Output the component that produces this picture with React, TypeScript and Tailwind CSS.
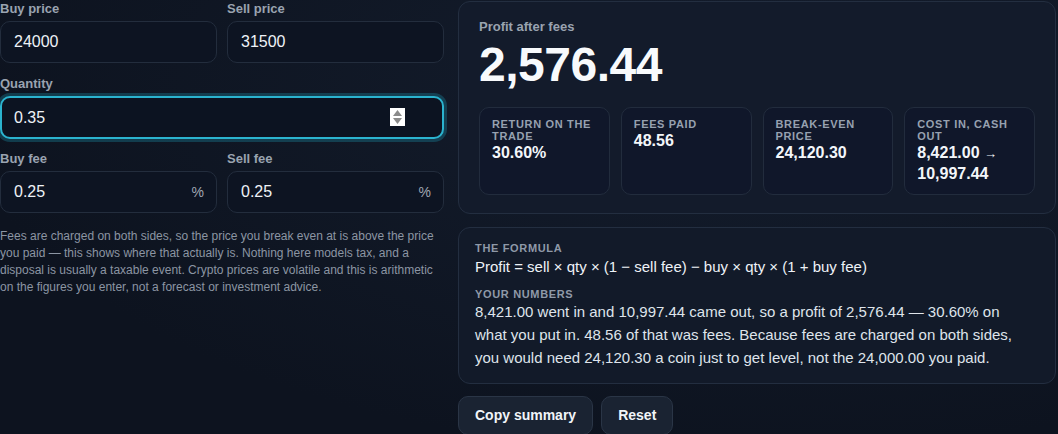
import React, { useState } from "react";

const font = "font-['Liberation_Sans',Arial,sans-serif]";

function Field({ label, value, suffix, focused, spinner }: { label: string; value: string; suffix?: string; focused?: boolean; spinner?: boolean }) {
  return (
    <label className="flex flex-col">
      <span className="text-[13px] leading-4 font-bold text-[#9aa3b0] mb-[4px]">{label}</span>
      <span className="relative block">
        <input
          readOnly
          value={value}
          className={
            focused
              ? "w-full h-[43px] rounded-[10px] bg-[#0c1321] border-2 border-[#2bb3cf] ring-[3px] ring-[#1fb6d3]/25 pl-[12px] pr-[38px] text-[16px] text-[#eef2f7] outline-none"
              : "w-full h-[42px] rounded-[10px] bg-[#0d1422] border border-[#232d3d] pl-[13px] pr-[38px] text-[16px] text-[#eef2f7] outline-none"
          }
        />
        {suffix && (
          <span className="absolute right-[13px] top-1/2 -translate-y-1/2 text-[14px] text-[#a0a7b3]">{suffix}</span>
        )}
        {spinner && (
          <span className="absolute right-[39px] top-[12px] w-[15px] h-[18px] bg-white flex flex-col items-center justify-center gap-[2px]">
            <svg width="9" height="6" viewBox="0 0 9 6"><path d="M4.5 0L9 6H0z" fill="#8a8a8a" /></svg>
            <svg width="9" height="6" viewBox="0 0 9 6"><path d="M0 0h9L4.5 6z" fill="#8a8a8a" /></svg>
          </span>
        )}
      </span>
    </label>
  );
}

function Stat({ label, value }: { label: string; value: React.ReactNode }) {
  return (
    <div className="rounded-[10px] border border-[#222c3d] bg-[#10172a] px-3 pt-[10px] pb-[10px]">
      <div className="text-[11px] leading-3 font-bold uppercase tracking-[0.06em] text-[#97a1b0]">{label}</div>
      <div className="mt-px text-[16px] leading-5 font-bold text-[#f3f6fa]">{value}</div>
    </div>
  );
}

export default function App() {
  const [copied] = useState(false);
  return (
    <div className={`${font} min-h-screen w-full bg-[#0e1522] bg-[radial-gradient(ellipse_at_70%_20%,#141d2d,#0d131f_75%)] text-white`}>
      <div className="w-[1056px] flex gap-[14px]">
        <div className="w-[444px] flex flex-col pt-px">
          <div className="grid grid-cols-2 gap-[10px]">
            <Field label="Buy price" value="24000" />
            <Field label="Sell price" value="31500" />
          </div>
          <div className="mt-[13px]">
            <Field label="Quantity" value="0.35" focused spinner />
          </div>
          <div className="grid grid-cols-2 gap-[10px] mt-[12px]">
            <Field label="Buy fee" value="0.25" suffix="%" />
            <Field label="Sell fee" value="0.25" suffix="%" />
          </div>
          <p className="mt-[15px] text-[12px] leading-[17px] text-[#8c95a3]">
            Fees are charged on both sides, so the price you break even at is above the price you paid — this shows where that actually is. Nothing here models tax, and a disposal is usually a taxable event. Crypto prices are volatile and this is arithmetic on the figures you enter, not a forecast or investment advice.
          </p>
        </div>

        <div className="w-[598px] flex flex-col pt-px">
          <div className="rounded-[12px] border border-[#232e40] bg-[#131b2b] px-5 pt-[17px] pb-[18px]">
            <div className="text-[13px] leading-4 font-bold text-[#9aa3b0]">Profit after fees</div>
            <div className="mt-[6px] text-[48px] leading-none font-bold tracking-[-0.01em] text-[#f8fafc]">2,576.44</div>
            <div className="mt-[18px] grid grid-cols-4 gap-[11px]">
              <Stat label="Return on the trade" value="30.60%" />
              <Stat label="Fees paid" value="48.56" />
              <Stat label="Break-even price" value="24,120.30" />
              <Stat label="Cost in, cash out" value={<>8,421.00 <span className="text-[13px]">→</span><br />10,997.44</>} />
            </div>
          </div>

          <div className="mt-[13px] rounded-[12px] border border-[#232e40] bg-[#121a29] px-4 pt-[14px] pb-[14px]">
            <div className="text-[11px] leading-3 font-bold uppercase tracking-[0.06em] text-[#8f99a8]">The formula</div>
            <div className="mt-[3px] text-[15px] leading-5 text-[#eef2f7]">
              Profit = sell × qty × (1 − sell fee) − buy × qty × (1 + buy fee)
            </div>
            <div className="mt-[11px] text-[11px] leading-3 font-bold uppercase tracking-[0.06em] text-[#8f99a8]">Your numbers</div>
            <p className="max-w-[550px] text-[15px] leading-[23px] text-[#dfe4eb]">
              8,421.00 went in and 10,997.44 came out, so a profit of 2,576.44 — 30.60% on what you put in. 48.56 of that was fees. Because fees are charged on both sides, you would need 24,120.30 a coin just to get level, not the 24,000.00 you paid.
            </p>
          </div>

          <div className="mt-[12px] flex gap-2">
            <button className="h-[39px] px-4 rounded-[10px] border border-[#2a3546] bg-[#1a2332] text-[14px] font-bold text-[#f1f5f9]">
              {copied ? "Copied" : "Copy summary"}
            </button>
            <button className="h-[39px] px-4 rounded-[10px] border border-[#2a3546] bg-[#1a2332] text-[14px] font-bold text-[#f1f5f9]">
              Reset
            </button>
          </div>
        </div>
      </div>
    </div>
  );
}
